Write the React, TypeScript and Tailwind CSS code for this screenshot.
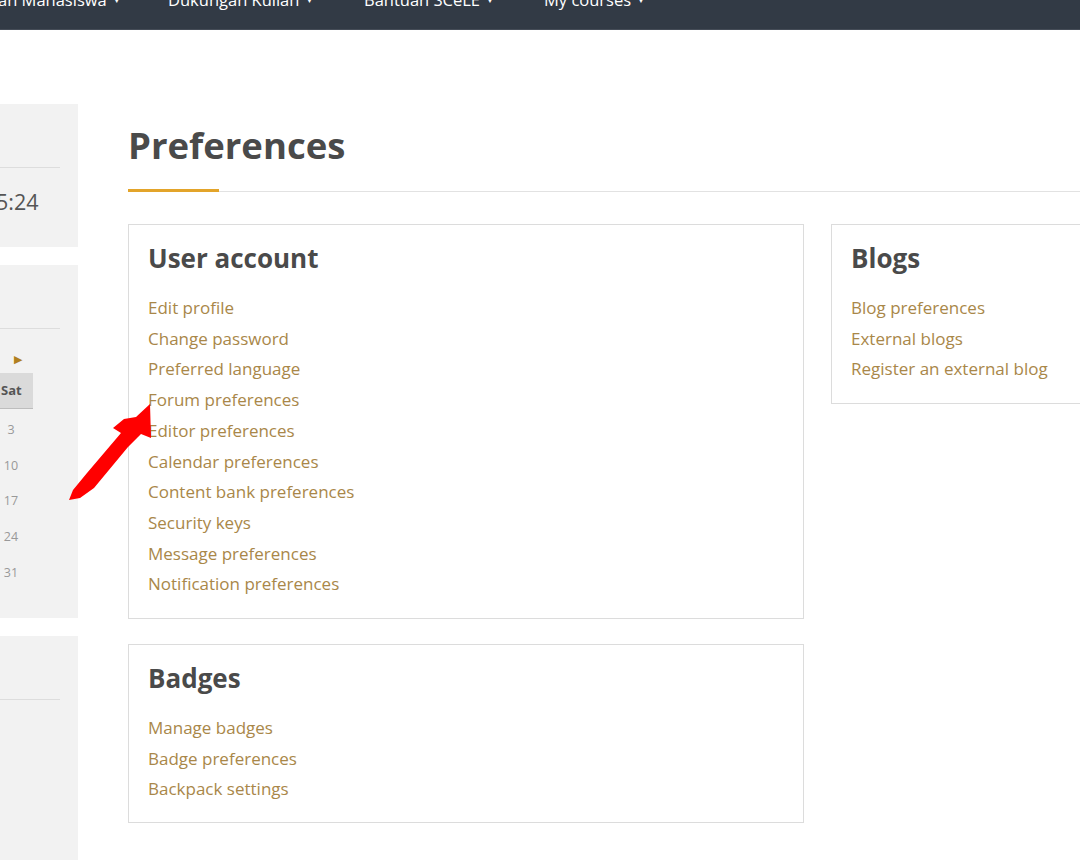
import React from "react";

const userAccount = [
  "Edit profile",
  "Change password",
  "Preferred language",
  "Forum preferences",
  "Editor preferences",
  "Calendar preferences",
  "Content bank preferences",
  "Security keys",
  "Message preferences",
  "Notification preferences",
];

const blogs = ["Blog preferences", "External blogs", "Register an external blog"];

const badges = ["Manage badges", "Badge preferences", "Backpack settings"];

const navItems = ["an Mahasiswa", "Dukungan Kuliah", "Bantuan SCeLE", "My courses"];

function Kartu({ judul, links, className }: { judul: string; links: string[]; className?: string }) {
  return (
    <section className={`border border-[#dcdcdc] bg-white px-[19px] ${className ?? ""}`}>
      <h3 className="text-[26px] font-bold leading-[34px] text-[#4a4a4a]">{judul}</h3>
      <ul className="mt-[18px]">
        {links.map((link) => (
          <li key={link} className="text-[17px] leading-[30.7px] text-[#a98749]">
            {link}
          </li>
        ))}
      </ul>
    </section>
  );
}

export default function App() {
  return (
    <div
      className="relative h-[860px] w-[1080px] overflow-hidden bg-white"
      style={{ fontFamily: '"Open Sans", "Liberation Sans", sans-serif' }}
    >
      <nav className="flex h-[30px] items-start overflow-hidden border-b border-[#454c57] bg-[#323a45] text-white">
        <div className="-mt-[12px] flex text-[16.5px]">
          {navItems.map((item, i) => (
            <span key={item} className={`flex items-center gap-[6px] ${i === 0 ? "-ml-[2px] w-[170px]" : i === 1 ? "w-[196px]" : i === 2 ? "w-[180px]" : ""}`}>
              {item}
              <span className="text-[8px]">▼</span>
            </span>
          ))}
        </div>
      </nav>

      <div className="flex">
        {/* sidebar */}
        <aside className="mt-[74px] flex w-[78px] shrink-0 flex-col gap-[18px]">
          <div className="h-[143px] bg-[#f2f2f2]">
            <div className="mt-[63px] mr-[18px] border-t border-[#dddddd]" />
            <p className="mt-[19px] -ml-[4px] text-[21.5px] leading-[30px] text-[#555]">5:24</p>
          </div>

          <div className="h-[353px] bg-[#f2f2f2]">
            <div className="mt-[63px] mr-[18px] border-t border-[#dddddd]" />
            <div className="mt-[22px] flex w-[33px] justify-end pr-[11px] text-[11px] leading-[16px] text-[#b07f1f]">▶</div>
            <div className="mt-[6px] flex h-[36px] w-[33px] items-center border-b border-[#bdbdbd] bg-[#dadada] pl-[1px] text-[13px] font-bold text-[#555]">
              Sat
            </div>
            <div className="mt-[3px] w-[22px] text-center text-[12.5px] text-[#999]">
              {["3", "10", "17", "24", "31"].map((d) => (
                <div key={d} className="h-[35.7px] pt-[10px] leading-[16px]">
                  {d}
                </div>
              ))}
            </div>
          </div>

          <div className="h-[260px] bg-[#f2f2f2]">
            <div className="mt-[63px] mr-[18px] border-t border-[#dddddd]" />
          </div>
        </aside>

        {/* konten utama */}
        <main className="ml-[50px] w-[1400px] shrink-0">
          <h2 className="mt-[93px] text-[36.5px] font-bold leading-[44px] text-[#4a4a4a]">Preferences</h2>
          <div className="mt-[22px] flex items-end">
            <div className="h-[3px] w-[91px] bg-[#e3a42a]" />
            <div className="h-px flex-1 bg-[#e2e2e2]" />
          </div>

          <div className="mt-[32px] grid grid-cols-[676px_676px] items-start gap-x-[27px]">
            <div className="flex flex-col gap-[25px]">
              <Kartu judul="User account" links={userAccount} className="pt-[16px] pb-[18px]" />
              <Kartu judul="Badges" links={badges} className="pt-[16px] pb-[17px]" />
            </div>
            <Kartu judul="Blogs" links={blogs} className="pt-[16px] pb-[18px]" />
          </div>
        </main>
      </div>

      {/* panah merah */}
      <svg className="absolute left-0 top-0" width="200" height="520" viewBox="0 0 200 520">
        <polygon
          points="150,404 151,438 141,434 128,447 94,488 80,498 69,500 73,490 87,473 121,433 113,428 124,419 136,417"
          fill="#ff0000"
        />
      </svg>
    </div>
  );
}
